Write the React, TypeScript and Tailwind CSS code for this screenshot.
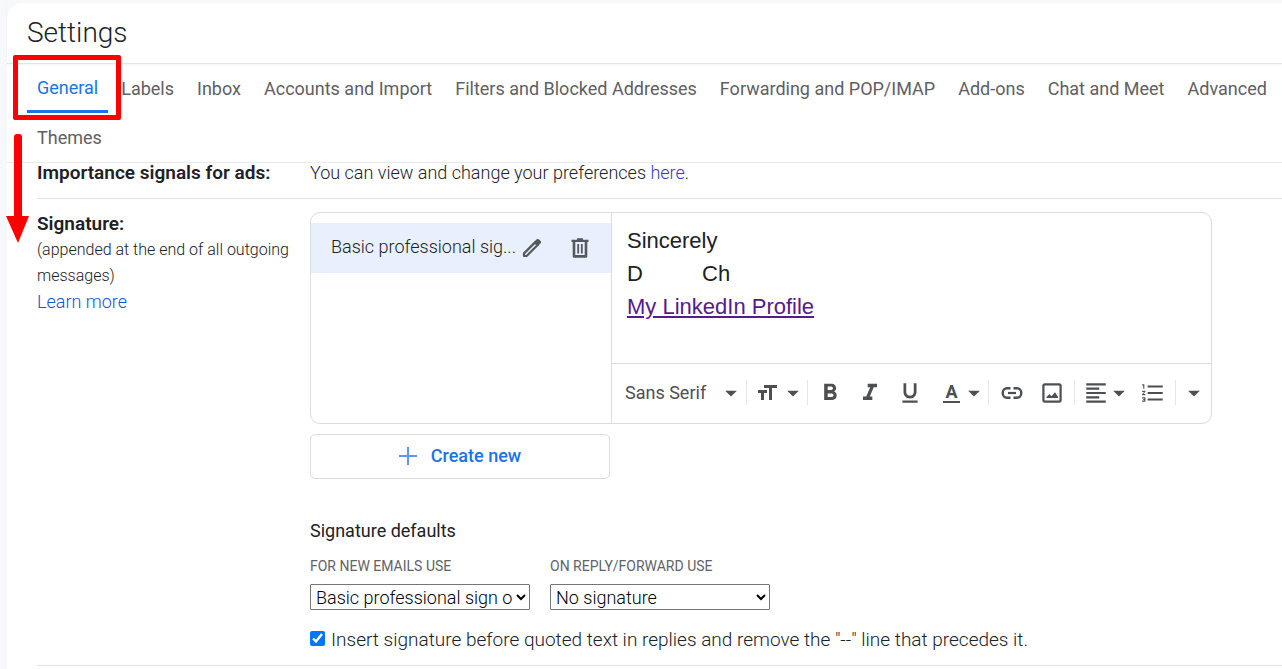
import type { ReactNode } from 'react';
import {
    MdArrowDropDown,
    MdFormatAlignLeft,
    MdFormatBold,
    MdFormatItalic,
    MdFormatListNumbered,
    MdFormatSize,
    MdFormatUnderlined,
} from 'react-icons/md';

const tabs = [
    'General',
    'Labels',
    'Inbox',
    'Accounts and Import',
    'Filters and Blocked Addresses',
    'Forwarding and POP/IMAP',
    'Add-ons',
    'Chat and Meet',
    'Advanced',
    'Themes',
];

function PencilIcon() {
    return (
        <svg viewBox="0 0 20 20" className="h-5 w-5" fill="none" stroke="currentColor">
            <path
                d="M2 18v-2.6L13 4.4l2.6 2.6L4.6 18z"
                strokeWidth="2.2"
                strokeLinejoin="round"
            />
            <path
                d="M11.8 4.2l2.6-2.6c.9-.9 1.9-.9 2.8 0l1.2 1.2c.9.9.9 1.9 0 2.8l-2.6 2.6z"
                fill="currentColor"
                stroke="none"
            />
        </svg>
    );
}

function TrashIcon() {
    return (
        <svg viewBox="0 0 20 20" className="h-5 w-5" fill="none" stroke="currentColor">
            <path d="M1.5 2.8h17M7 1.4h6" strokeWidth="2.2" />
            <path d="M4 3v15.4h12V3" strokeWidth="2.6" strokeLinejoin="round" />
            <path d="M8.2 6v9.5M11.8 6v9.5" strokeWidth="1.8" />
        </svg>
    );
}

function LinkIcon() {
    return (
        <svg viewBox="0 0 22 14" className="h-3.5 w-[22px]" fill="none" stroke="currentColor">
            <path
                d="M9.5 2.2H6a4.3 4.8 0 0 0 0 9.6h3.5M12.5 2.2H16a4.3 4.8 0 0 1 0 9.6h-3.5"
                strokeWidth="2.4"
            />
            <path d="M7 7h8" strokeWidth="2.2" />
        </svg>
    );
}

function ImageIcon() {
    return (
        <svg viewBox="0 0 20 20" className="h-5 w-5">
            <rect
                x="1.4"
                y="1.4"
                width="17.2"
                height="17.2"
                rx="1.5"
                fill="none"
                stroke="currentColor"
                strokeWidth="2.2"
            />
            <path d="M4.5 15v-1l3-3 2 2.2 3.5-4 3 4.8v1z" fill="currentColor" />
        </svg>
    );
}

interface ToolProps {
    label: string;
    className?: string;
    children: ReactNode;
}

function Tool({ label, className = 'w-10 justify-center', children }: ToolProps) {
    return (
        <button type="button" aria-label={label} className={`flex h-full items-center ${className}`}>
            {children}
        </button>
    );
}

function Caret() {
    return <MdArrowDropDown className="h-7 w-7 shrink-0" />;
}

function Toolbar() {
    return (
        <div className="flex h-[60px] items-center border-t border-[#dadce0] pb-0.5 text-[#4d4f52]">
            <div className="flex h-[25px] w-[135px] border-r border-gray-200">
                <Tool label="Font" className="w-full justify-between pr-px pl-[13px] text-lg">
                    Sans Serif
                    <Caret />
                </Tool>
            </div>
            <div className="flex h-[25px] w-[61px] border-r border-gray-200">
                <Tool label="Size" className="w-full justify-end">
                    <MdFormatSize className="h-6 w-6 shrink-0" />
                    <Caret />
                </Tool>
            </div>
            <div className="flex h-[25px] w-[181px] border-r border-gray-200 pl-0.5">
                <Tool label="Bold">
                    <MdFormatBold className="h-7 w-7" />
                </Tool>
                <Tool label="Italic">
                    <MdFormatItalic className="h-7 w-7" />
                </Tool>
                <Tool label="Underline">
                    <MdFormatUnderlined className="h-[26px] w-[26px]" />
                </Tool>
                <Tool label="Text color" className="w-[58px] justify-end">
                    <span className="w-[17px] shrink-0 border-b-2 border-current text-center text-lg leading-[18px] font-bold">
                        A
                    </span>
                    <Caret />
                </Tool>
            </div>
            <div className="flex h-[25px] w-[86px] justify-center border-r border-gray-200">
                <Tool label="Link">
                    <LinkIcon />
                </Tool>
                <Tool label="Insert image">
                    <ImageIcon />
                </Tool>
            </div>
            <div className="flex h-[25px] w-[101px] border-r border-gray-200">
                <Tool label="Align" className="w-[58px] justify-end">
                    <MdFormatAlignLeft className="-mr-1 h-[26px] w-[26px] shrink-0" />
                    <Caret />
                </Tool>
                <Tool label="Numbered list">
                    <MdFormatListNumbered className="h-[26px] w-[26px]" />
                </Tool>
            </div>
            <Tool label="More formatting options" className="flex-1 justify-center">
                <Caret />
            </Tool>
        </div>
    );
}

function SignatureEditor() {
    return (
        <div className="flex h-[212px] w-full max-w-[902px] overflow-hidden rounded-[10px] border border-[#dadce0]">
            <div className="w-[301px] shrink-0 border-r border-[#dadce0] pt-2.5">
                <div className="flex h-[50px] items-center bg-[#e8f0fe] pl-5">
                    <span className="w-[191px] pb-0.5 text-lg font-light">Basic professional sig...</span>
                    <button type="button" aria-label="Edit name" className="text-[#55585c]">
                        <PencilIcon />
                    </button>
                    <button type="button" aria-label="Delete" className="ml-7 text-[#55585c]">
                        <TrashIcon />
                    </button>
                </div>
            </div>
            <div className="flex flex-1 flex-col">
                <div className="flex-1 px-[15px] pt-[11px] font-['Liberation_Sans',Arial,sans-serif] text-[22px] leading-[33px] text-[#202124]">
                    <p>Sincerely</p>
                    <p className="flex">
                        <span className="w-[75px]">D</span>
                        <span>Ch</span>
                    </p>
                    <a href="#linkedin" className="text-[#551a8b] underline">
                        My LinkedIn Profile
                    </a>
                </div>
                <Toolbar />
            </div>
        </div>
    );
}

interface SignatureSelectProps {
    id: string;
    label: string;
    options: string[];
}

function SignatureSelect({ id, label, options }: SignatureSelectProps) {
    return (
        <div className="w-[220px]">
            <label htmlFor={id} className="block text-sm leading-[22px] font-[450] text-[#5f6368]">
                {label}
            </label>
            <select
                id={id}
                className="mt-[7px] block h-[26px] w-full rounded-[1px] border border-[#767676] bg-white px-px text-lg leading-6 font-light text-black"
            >
                {options.map((option) => (
                    <option key={option}>{option}</option>
                ))}
            </select>
        </div>
    );
}

export default function App() {
    return (
        <div className="relative min-h-screen overflow-hidden bg-[#f6f8fc] pt-[3px] pl-[7px] font-[Roboto,sans-serif] text-[#202124]">
            <div className="min-h-screen rounded-tl-2xl bg-white">
                <header className="flex h-[61px] items-center border-b border-[#e4e5e7] pl-5 shadow-xs">
                    <h1 className="text-[28px] font-[350]">Settings</h1>
                </header>
                <nav className="flex flex-wrap gap-x-[3px] border-b border-[#e8ebee] pl-5 text-lg font-[450] text-[#5f6062]">
                    {tabs.map((tab) => (
                        <a
                            key={tab}
                            href={`#${tab}`}
                            className={
                                tab === 'General'
                                    ? 'flex h-[49px] items-center border-b-3 border-[#1a73e8] px-2.5 pt-px text-[#1a73e8]'
                                    : 'flex h-[49px] items-center px-2.5'
                            }
                        >
                            {tab}
                        </a>
                    ))}
                </nav>

                <main className="pl-[30px]">
                    <section className="flex h-9 border-b border-[#dfe1e5] text-lg leading-5">
                        <h2 className="w-[273px] shrink-0 text-[19px] font-semibold">Importance signals for ads:</h2>
                        <p className="font-[350]">
                            You can view and change your preferences{' '}
                            <a href="#ads" className="text-[#2a3fc0]">
                                here
                            </a>
                            .
                        </p>
                    </section>

                    <section className="flex border-b border-[#dfe1e5] pb-3">
                        <div className="w-[273px] shrink-0 pt-3 leading-[26px]">
                            <h2 className="text-[19px] leading-[26px] font-semibold">Signature:</h2>
                            <p className="pr-4 text-base leading-[26px] font-light">
                                (appended at the end of all outgoing messages)
                            </p>
                            <a href="#learn" className="block text-lg leading-[26px] font-light text-[#1155cc]">
                                Learn more
                            </a>
                        </div>
                        <div className="min-w-0 flex-1 pt-[13px]">
                            <SignatureEditor />
                            <button
                                type="button"
                                className="mt-2.5 flex h-[45px] w-[300px] items-center justify-center gap-3.5 rounded-[5px] border border-[#dadce0] pb-0.5 text-lg font-medium text-[#1a73e8]"
                            >
                                <svg viewBox="0 0 18 18" className="h-[18px] w-[18px]" stroke="#5c97f7" strokeWidth="2">
                                    <path d="M9 0v18M0 9h18" />
                                </svg>
                                Create new
                            </button>

                            <h3 className="mt-10 text-lg leading-6 font-[450]">Signature defaults</h3>
                            <div className="mt-3 flex gap-5">
                                <SignatureSelect
                                    id="new-emails"
                                    label="FOR NEW EMAILS USE"
                                    options={['Basic professional sign off', 'No signature']}
                                />
                                <SignatureSelect
                                    id="replies"
                                    label="ON REPLY/FORWARD USE"
                                    options={['No signature', 'Basic professional sign off']}
                                />
                            </div>
                            <div className="mt-[17px] flex items-center gap-1.5">
                                <input
                                    id="before-quoted"
                                    type="checkbox"
                                    defaultChecked
                                    className="mb-1 h-[15px] w-[15px] accent-[#0075ff]"
                                />
                                <label htmlFor="before-quoted" className="text-[19px] leading-[26px] font-light">
                                    Insert signature before quoted text in replies and remove the "--" line that precedes it.
                                </label>
                            </div>
                        </div>
                    </section>
                </main>
            </div>

            {/* red callout around the active tab, arrow pointing to the signature row */}
            <div className="pointer-events-none absolute top-[55px] left-[13px] h-[65px] w-[108px] rounded-xs border-5 border-[#ff0000]" />
            <svg
                viewBox="0 0 24 110"
                className="pointer-events-none absolute top-[134px] left-1.5 h-[110px] w-6"
                fill="#ff0000"
            >
                <rect x="8" y="0" width="8" height="86" rx="3" />
                <path d="M0 82h23L12 109z" />
            </svg>
        </div>
    );
}
